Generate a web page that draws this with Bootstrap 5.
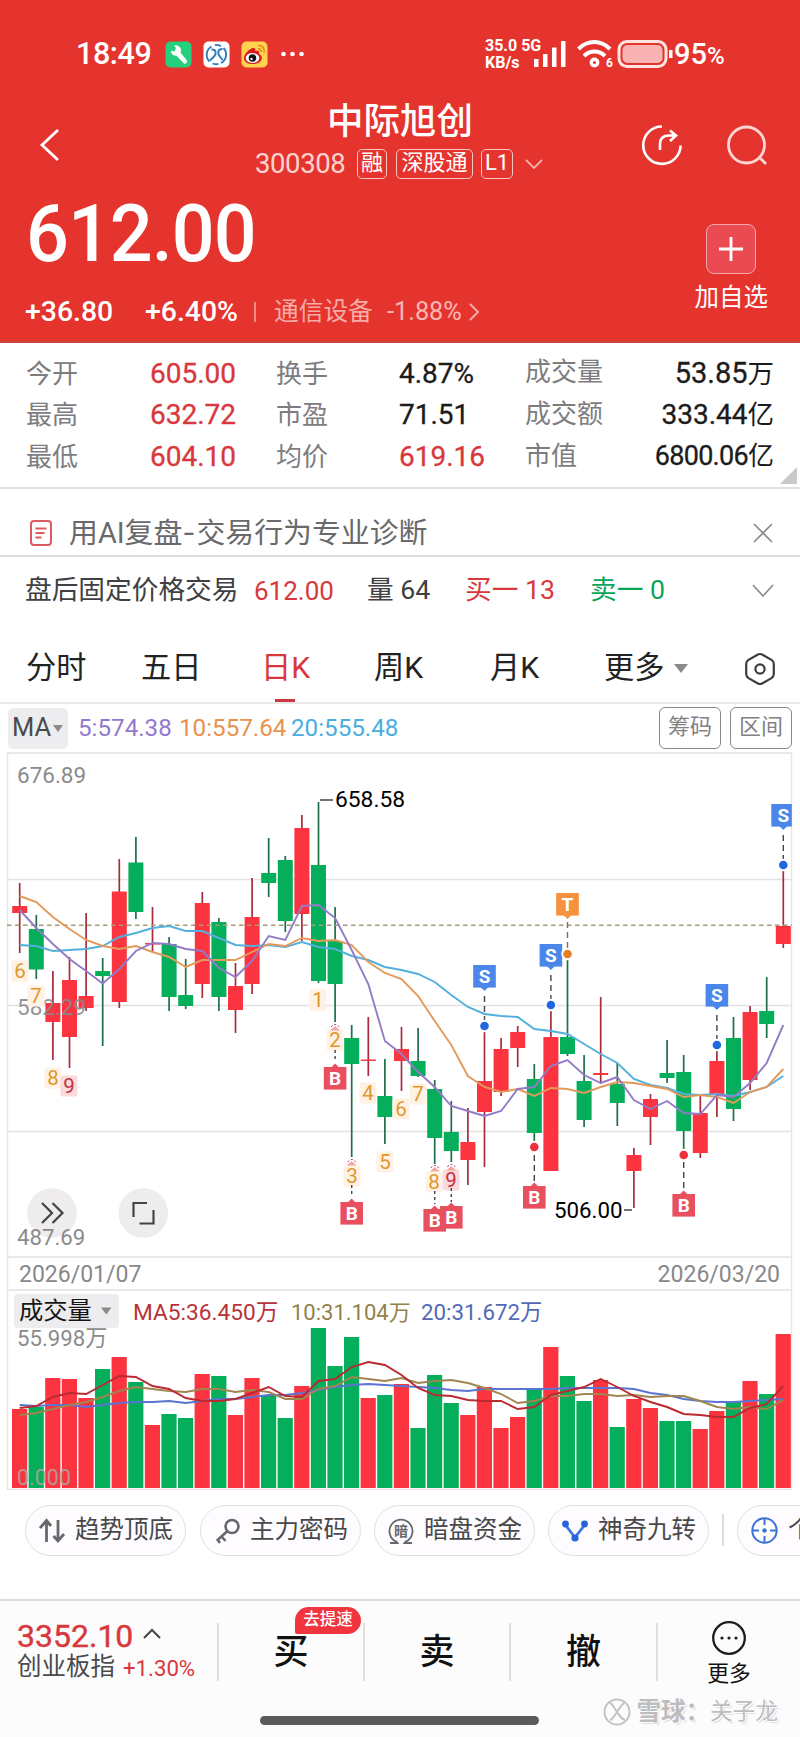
<!DOCTYPE html>
<html lang="zh-CN">
<head>
<meta charset="utf-8">
<meta name="viewport" content="width=device-width, initial-scale=1">
<title>中际旭创 300308</title>
<link href="https://cdn.jsdelivr.net/npm/bootstrap@5.3.0/dist/css/bootstrap.min.css" rel="stylesheet">
<style>
:root{--up:#d8383c;--down:#0ba55a;--ink:#222;--mute:#7d7d7f;--hair:#e2e2e4}
body{font-family:Roboto,"Noto Sans CJK SC",sans-serif;font-size:26px;line-height:1;color:var(--ink);background:#fff;width:800px;overflow-x:hidden}
svg{display:block;flex:none}
.text-up{color:var(--up)}.text-down{color:var(--down)}.text-mute{color:var(--mute)}
.tracks{display:grid;align-items:center;white-space:nowrap}
/* red header */
.quote-head{background:#e5342e;color:#fff;height:343px;border-bottom:2px solid #c9443c}
.status{height:64px;margin-top:22px;grid-template-columns:76px 89px 38px 38px 40px 204px 49px 43px 40px 57px 1fr}
.status .clock{font-size:30.5px;font-weight:500;letter-spacing:-.4px}
.status .speed{font-size:16px;font-weight:700;line-height:17px}
.status .pct{font-size:29px;font-weight:500;letter-spacing:0}
.title-bar{height:98px;margin-top:-1px;grid-template-columns:38px 217px 289px 96px 86px 1fr}
.title-bar>svg{margin-top:22px}
.stock-name{font-size:36.5px;font-weight:500;line-height:42px;margin-top:12px}
.stock-code{font-size:27.5px;letter-spacing:-.4px;color:#fbd3cf;font-weight:400;width:102px}
.tag{border:1.5px solid #f9c6c2;border-radius:5px;height:30px;font-size:22px;line-height:26px;text-align:center}
.price{font-size:80px;font-weight:500;letter-spacing:-1px;transform:scaleX(.943);transform-origin:left center}
.price-row{height:104px;margin-top:-1px;padding-left:26px;padding-right:32px}
.add-btn{width:50px;height:50px;flex:none;border:1.5px solid #f6a7a9;border-radius:8px;background:#ea4a51}
.change-row{height:38px;margin-top:7px;grid-template-columns:25px 120px 109px 20px 113px 81px 1fr;font-size:28.4px}
.change-row .chg{font-weight:500}
/* stats */
.stats{height:146px;padding-top:10px;border-bottom:2px solid var(--hair);position:relative}
.stats .tracks{height:41.5px;grid-template-columns:26px 124px 126px 123px 126px 1fr 26px}
.stats b{font-weight:400;font-size:28px;color:#1c1c1c;-webkit-text-stroke:.3px}
.stats b span{-webkit-text-stroke:0}
.stats b.text-up{color:var(--up)}
.fold{position:absolute;right:3px;bottom:3px}
.ai-row{height:68px;padding-top:22px;border-bottom:2px solid #dededf;grid-template-columns:29px 40px 1fr 47px;font-size:28.9px;color:#69696b}
.ai-row .dash{display:inline-block;transform:scaleX(1.3);margin:0 3px}
.after-row{height:69px;padding-bottom:2px;grid-template-columns:25px 229px 113px 98px 125px 162px 1fr;font-size:26.7px;color:#404043}
.after-row .n{font-size:26px}
/* tabs */
.tabs{height:78px;padding-top:9px;border-bottom:2px solid #e9e9eb;grid-template-columns:26px 115px 120px 113px 116px 114px 70px 70px 1fr;font-size:30.2px;color:#222}
.tabs .on{color:var(--up);position:relative}
.tabs .on::after{content:"";position:absolute;left:14px;bottom:-18px;width:20px;height:3px;background:#cc3b45}
.tri{width:0;height:0;border:7px solid transparent;border-top:9px solid #8b8b8b;border-bottom:0}
.ma-row{height:48px;grid-template-columns:8px 70px 101px 112px 368px 71px 62px;font-size:24.2px}
.ma-row .pick{width:60px;height:41px;background:#ededef;border-radius:5px;font-size:25.5px;color:#4a4a4d;padding-left:4px}
.ma-row .box{height:42px;border:1.6px solid #868688;border-radius:6px;font-size:22px;color:#828285;line-height:37px;text-align:center}
/* chips */
.chips{height:109px;padding:15px 0 0 25px;overflow:hidden}
.chip{height:51px;width:161px;border:1.5px solid #e0dfe2;border-radius:26px;background:#fefcfe;font-size:24.5px;color:#48484b;padding-left:12px;gap:9px;white-space:nowrap;flex:none}
/* bottom bar */
.dock{height:138px;border-top:2px solid #dcdcde;background:#fdfcfd;grid-template-columns:217px 146px 146px 147px 144px;align-items:start}
.dock .cell{height:58px;margin-top:22px;border-left:2px solid #dfdfe1;font-size:35px;font-weight:500;color:#111;position:relative}
.dock .flag{position:absolute;left:76px;top:-16px;width:66px;height:27px;border-radius:14px 14px 14px 2px;background:#f0353f;color:#fff;font-size:16.5px;line-height:25px;text-align:center}
.homebar{width:279px;height:9px;border-radius:5px;background:#5b5b5d}
.mark-by{position:absolute;right:22px;bottom:10px;height:30px;font-size:22.7px;color:#bdbdc0;text-shadow:1px 1px 0 #fff,2px 2px 1px #ddd;white-space:nowrap}
</style>
</head>
<body>
<header class="quote-head d-flex flex-column">
  <div class="status tracks">
    <span></span>
    <span class="clock">18:49</span>
    <svg width="27" height="27" viewBox="0 0 27 27"><rect x=".5" y=".5" width="26" height="26" rx="5" fill="#25d07c"/><path d="M6 9.500l3.500 1L11 7 9 4.800a5 5 0 0 1 6.500 6.700l6 7.500a2 2 0 0 1-3.200 2.800l-6.800-7A5 5 0 0 1 6 9.500z" fill="#fff"/></svg>
    <svg width="27" height="27" viewBox="0 0 27 27"><rect x=".5" y=".5" width="26" height="26" rx="5" fill="#fff"/><g fill="none" stroke="#2f7dbb" stroke-width="1.9"><path d="M6.500 20.500A9.500 9.500 0 0 1 8.500 5.500M20.500 7A9.500 9.500 0 0 1 18 22M12 4a9.500 9.500 0 0 1 6 1.200M9.500 22.500a9 9 0 0 0 6 .4"/><path d="M8.500 8.500c5-.5 5 4.500 2.500 7l-4 4M19.500 8c-5.500 0-5 5-2.500 7.500l2.500 3.500"/></g></svg>
    <svg width="27" height="27" viewBox="0 0 27 27"><rect x=".5" y=".5" width="26" height="26" rx="5" fill="#ffd34d"/><path d="M3 17c0-4 5-9 9-10 2 0 3 1 2 3 3-1 5 0 4 3 6 3 2 10-6 10-5 0-9-2-9-6z" fill="#dc1c1c"/><ellipse cx="11.500" cy="17" rx="6.800" ry="4.900" fill="#fff"/><circle cx="11.500" cy="17" r="3.800" fill="#111"/><circle cx="10.500" cy="18" r="1.200" fill="#fff"/><path d="M17 4.500c4-.5 7 2.500 6 7M17 7.800c2-.3 3.500 1 3 3.200" fill="none" stroke="#e28b1d" stroke-width="1.600"/></svg>
    <svg width="26" height="8" viewBox="0 0 26 8" fill="#fff"><circle cx="2.500" cy="4" r="2.300"/><circle cx="11.500" cy="4" r="2.300"/><circle cx="20.500" cy="4" r="2.300"/></svg>
    <span class="speed d-block">35.0 5G<br>KB/s</span>
    <svg width="34" height="28" viewBox="0 0 34 28" fill="#fff"><rect x="0" y="19" width="4.500" height="8"/><rect x="9" y="14" width="4.500" height="13"/><rect x="18" y="7.500" width="4.500" height="19.500"/><rect x="27" y="1" width="4.500" height="26"/></svg>
    <svg width="37" height="30" viewBox="0 0 37 30"><g fill="none" stroke="#fff" stroke-width="4"><path d="M1.500 10c9-9.300 22.500-9.300 31.500 0M7 17c6-6 15-6 21 0"/><circle cx="17.500" cy="23.500" r="3.200" stroke-width="3.400"/></g><text x="29" y="28" font-size="12" font-weight="700" fill="#fff">6</text></svg>
    <svg width="57" height="30" viewBox="0 0 57 30"><rect x="2" y="2.500" width="47" height="25" rx="8" fill="none" stroke="#ffe3e0" stroke-width="3"/><rect x="5.500" y="6" width="40" height="18" rx="5" fill="#f9b3b2"/><rect x="52" y="11" width="3.500" height="8" fill="#fff"/></svg>
    <span class="pct">95<small style="font-size:24px">%</small></span>
  </div>
  <div class="title-bar tracks">
    <span></span>
    <svg width="22" height="34" viewBox="0 0 22 34" fill="none" stroke="#fff" stroke-width="2.800"><path d="M20 2L4 17l16 15"/></svg>
    <div class="d-flex flex-column align-items-start">
      <div class="stock-name" style="margin-left:72px">中际旭创</div>
      <div class="d-flex align-items-center" style="margin-top:6px">
        <span class="stock-code">300308</span>
        <span class="tag" style="width:30px">融</span>
        <span class="tag" style="width:77px;margin-left:9px">深股通</span>
        <span class="tag" style="width:32px;margin-left:8px">L1</span>
        <svg class="ms-2 flex-shrink-0" style="margin-right:-20px" width="26" height="14" viewBox="0 0 26 14" fill="none" stroke="#f5b0ac" stroke-width="1.800"><path d="M5 3l8 8 8-8"/></svg>
      </div>
    </div>
    <span></span>
    <svg width="44" height="44" viewBox="0 0 44 44" fill="none" stroke="#fff" stroke-width="2.600"><path d="M22 3.500A18.700 18.700 0 1 0 40.600 22.500"/><path d="M20 27v-6c0-6 4-8.500 9-8.500h6M30 7.500l6 5-6 5.500"/></svg>
    <svg width="44" height="44" viewBox="0 0 44 44" fill="none" stroke="#fdd5d2" stroke-width="2.800"><circle cx="20.500" cy="22" r="18"/><path d="M33 34l7 7"/></svg>
  </div>
  <div class="price-row d-flex justify-content-between">
    <div class="price" style="margin-top:12px">612.00</div>
    <div class="d-flex flex-column align-items-center" style="margin-top:42px">
      <div class="add-btn d-flex align-items-center justify-content-center"><svg width="26" height="26" viewBox="0 0 26 26" stroke="#fff" stroke-width="2.800"><path d="M13 1v24M1 13h24"/></svg></div>
      <div style="font-size:24.5px;margin-top:12px;flex:none">加自选</div>
    </div>
  </div>
  <div class="change-row tracks">
    <span></span><span class="chg">+36.80</span><span class="chg">+6.40%</span>
    <span style="width:2px;height:20px;background:#f08b86"></span>
    <span style="font-size:24.700px;color:#f6aba7">通信设备</span><span style="font-size:25.300px;color:#f9b8b4">-1.88%</span>
    <svg width="12" height="18" viewBox="0 0 12 18" fill="none" stroke="#f6aba7" stroke-width="2"><path d="M2 1l8 8-8 8"/></svg>
  </div>
</header>

<section class="stats">
  <div class="tracks"><i></i><span class="text-mute">今开</span><b class="text-up">605.00</b><span class="text-mute">换手</span><b>4.87%</b><span class="d-flex justify-content-between"><span class="text-mute">成交量</span><b style="font-size:29px">53.85<span style="font-size:26.500px">万</span></b></span></div>
  <div class="tracks"><i></i><span class="text-mute">最高</span><b class="text-up">632.72</b><span class="text-mute">市盈</span><b>71.51</b><span class="d-flex justify-content-between"><span class="text-mute">成交额</span><b>333.44<span style="font-size:26.500px">亿</span></b></span></div>
  <div class="tracks"><i></i><span class="text-mute">最低</span><b class="text-up">604.10</b><span class="text-mute">均价</span><b class="text-up">619.16</b><span class="d-flex justify-content-between"><span class="text-mute">市值</span><b style="font-size:27px;letter-spacing:-.7px">6800.06<span style="font-size:26px;letter-spacing:0">亿</span></b></span></div>
  <svg class="fold" width="17" height="17"><path d="M17 0v17H0z" fill="#c9c9cb"/></svg>
</section>

<section class="ai-row tracks">
  <i></i>
  <svg width="24" height="28" viewBox="0 0 24 28" fill="none" stroke="#dc5a60" stroke-width="2"><rect x="2" y="2" width="20" height="24" rx="3"/><path d="M6.500 9.500h11M6.500 14h9M6.500 18.500h6"/></svg>
  <span>用AI复盘<span class="dash">-</span>交易行为专业诊断</span>
  <svg width="20" height="20" viewBox="0 0 20 20" stroke="#8b8b8d" stroke-width="1.700"><path d="M1 1l18 18M19 1L1 19"/></svg>
</section>
<section class="after-row tracks">
  <i></i><span>盘后固定价格交易</span><span class="n text-up">612.00</span><span>量 64</span><span class="text-up">买一 <span>13</span></span><span class="text-down">卖一 0</span>
  <svg width="22" height="14" viewBox="0 0 22 14" fill="none" stroke="#8d8d90" stroke-width="1.700"><path d="M1 1l10 11L21 1"/></svg>
</section>

<nav class="tabs tracks">
  <i></i><span>分时</span><span>五日</span><span class="on">日K</span><span>周K</span><span>月K</span><span>更多</span><i class="tri"></i>
  <svg width="32" height="34" viewBox="0 0 32 34" fill="none" stroke="#3c3c40" stroke-width="2.200"><path d="M13.500 2.700q2.500-1.400 5 0l9 5.200q2.300 1.400 2.300 4v10.200q0 2.600-2.300 4l-9 5.200q-2.500 1.400-5 0l-9-5.200q-2.300-1.400-2.300-4V11.900q0-2.600 2.300-4z"/><circle cx="16" cy="17" r="4.600"/></svg>
</nav>
<div class="ma-row tracks">
  <i></i><span class="pick d-flex align-items-center">MA<i class="tri" style="border-width:7px 5px 0;margin-left:2px"></i></span>
  <span style="color:#9478ce">5:574.38</span><span style="color:#e8924e">10:557.64</span><span style="color:#49aede">20:555.48</span>
  <span class="box" style="width:62px">筹码</span><span class="box">区间</span>
</div>

<svg id="kline" width="800" height="537" viewBox="0 752 800 537"></svg>
<svg id="volume" width="800" height="201" viewBox="0 1289 800 201"></svg>

<div class="chips d-flex align-items-start">
  <div class="chip d-flex align-items-center" style="margin-right:14px"><svg width="28" height="26" viewBox="0 0 28 26" fill="none" stroke="#68686b" stroke-width="2.800"><path d="M8.500 24V3M2 10l6.500-7.500L13 8M20 2v21M26 16l-6 7-4.500-5"/></svg><span>趋势顶底</span></div>
  <div class="chip d-flex align-items-center" style="margin-right:13px"><svg style="margin-left:2px" width="26" height="26" viewBox="0 0 26 26" fill="none" stroke="#68686b" stroke-width="2.600"><circle cx="17" cy="8.500" r="6.500"/><path d="M12.500 13L2 22.500M6.500 18.500l4 4.500M2 21l3 4"/></svg><span>主力密码</span></div>
  <div class="chip d-flex align-items-center" style="margin-right:13px"><svg width="28" height="28" viewBox="0 0 28 28"><path d="M9 24.500a11.500 11.500 0 1 1 10 0M3 26h7.500l-1.500-2M25 26h-7.500l1.500-2" fill="none" stroke="#68686b" stroke-width="1.800"/><text x="7" y="18.800" font-size="14" font-weight="700" fill="#68686b">暗</text></svg><span>暗盘资金</span></div>
  <div class="chip d-flex align-items-center"><svg width="28" height="24" viewBox="0 0 28 24"><path d="M4 5.500l10 13 10-13" fill="none" stroke="#3f76de" stroke-width="2.800"/><g fill="#2a62dc"><circle cx="4.500" cy="5" r="3.400"/><circle cx="23.500" cy="5" r="3.400"/><circle cx="14" cy="19" r="3.600"/></g></svg><span>神奇九转</span></div>
  <span style="width:2px;height:32px;background:#dededf;margin:9px 13px 0;flex:none"></span>
  <div class="chip d-flex align-items-center"><svg width="29" height="29" viewBox="0 0 29 29" fill="none" stroke="#3b74d6" stroke-width="2"><circle cx="14.500" cy="14.500" r="12.200"/><path d="M14.500 2v7M14.500 20v7M2 14.500h7M20 14.500h7"/><circle cx="14.500" cy="14.500" r="2.200" fill="#3b74d6" stroke="none"/></svg><span>个</span></div>
</div>

<footer class="dock tracks position-relative">
  <div style="padding:18px 0 0 17px">
    <div class="text-up d-flex align-items-center" style="font-size:32px;height:33px;-webkit-text-stroke:.4px">3352.10<svg style="margin:-4px 0 0 9px" width="20" height="11" viewBox="0 0 20 11" fill="none" stroke="#444" stroke-width="2"><path d="M2 10l8-8 8 8"/></svg></div>
    <div class="d-flex align-items-center" style="font-size:24.500px;height:26px;color:#4a4a4d;margin-top:2px">创业板指<span class="text-up" style="font-size:22.200px;margin:2px 0 0 8px">+1.30%</span></div>
  </div>
  <div class="cell d-flex align-items-center justify-content-center">买<span class="flag">去提速</span></div>
  <div class="cell d-flex align-items-center justify-content-center">卖</div>
  <div class="cell d-flex align-items-center justify-content-center">撤</div>
  <div class="cell d-flex flex-column align-items-center" style="font-size:21.800px;font-weight:400"><svg style="margin:-3px 0 7px;flex:none" width="36" height="36" viewBox="0 0 36 36"><circle cx="18" cy="18" r="15.800" fill="none" stroke="#1d1d1d" stroke-width="2.300"/><g fill="#1d1d1d"><circle cx="11" cy="18" r="1.600"/><circle cx="18" cy="18" r="1.600"/><circle cx="25" cy="18" r="1.600"/></g></svg>更多</div>
  <div class="position-absolute bottom-0 start-0 w-100 d-flex justify-content-center" style="padding-bottom:12px"><div class="homebar" style="margin-left:-1px"></div></div>
  <div class="mark-by d-flex align-items-center"><svg width="30" height="30" viewBox="0 0 30 30" fill="none" stroke="#c3c3c6" stroke-width="2"><circle cx="15" cy="15" r="12.500"/><path d="M8 6c4 2 4 5 7 9s4 7 8 8M22 6c-4 3-5 6-7 9s-4 7-7 8"/></svg><span style="margin-left:4px;font-weight:700;font-size:24.500px">雪球：</span><span>关子龙</span></div>
</footer>

<script>
// Daily sessions: direction, high, body top, body bottom, low, volume bar top
const days = `R 883 906 913 953 1409|G 915 929 969.500 979 1407|R 971 1003 1022 1060 1378|R 957 980 1037 1068 1379|R 913 996 1008 1011 1398|G 958 971 976 1046 1369|R 859 891.500 1002 1008 1357|G 837 862.500 912 919 1382|R 907 943 944.500 952 1425|G 937 944 997 1011 1414|G 959 995 1006 1009 1418|R 892 903 984 998 1374|G 918 922 997 1011 1376|R 963 986 1010 1033 1415|R 878 917 984 994 1378|G 838 873 883 897 1395|G 856 860 921 932 1418|R 815 828 914 941 1386|G 802 865 981 983 1328|G 907 941 984 1022 1366|G 1025 1038 1064 1157 1337|R 1017 1059.500 1061 1076 1398|G 1059 1096 1117 1144 1395|R 1027 1049 1061 1091 1384|G 1028 1061 1076 1077 1428|G 1080 1089 1138 1164 1375|G 1101 1132 1151 1162 1403|R 1108 1142 1160 1185 1415|R 1032 1081 1112 1167 1387|R 1038 1049 1092 1096 1428|R 1026 1032 1048 1067 1417|G 1064 1079 1133 1141 1390|R 1011 1037 1171 1171 1347|G 960 1037 1054 1056 1376|G 1055 1081 1120 1127 1401|R 997 1073 1075 1084 1380|G 1063 1084 1103 1126 1427|R 1148 1155 1171 1208 1399|R 1094 1099 1117 1145 1408|G 1040 1073 1078 1083 1421|G 1055 1072 1131 1149 1421|R 1094 1113 1153 1158 1429|R 1051 1061 1094 1117 1411|G 1017 1038 1109 1121 1402|R 1006 1012 1080 1090 1381|G 977 1011 1024 1038 1394|R 871 926 944 948 1334`
  .split('|').map(s => { const p = s.split(' '); return [p[0], ...p.slice(1).map(Number)]; });
const price = [
 ['#53b0dc','945 946 951 950 949 946 937 933 928 926 931 931 938 945 946 945 947 942 947 949 956 960 967 970 974 982 995 1007 1014 1016 1017 1029 1031 1034 1044 1054 1063 1079 1085 1088 1094 1095 1094 1096 1092 1087 1076'],
 ['#e39a5a','896 902 917 929 940 946 949 946 952 957 967 960 960 960 952 944 946 938 941 940 945 962 973 979 996 1021 1045 1076 1087 1092 1089 1096 1088 1089 1093 1087 1082 1083 1086 1089 1097 1095 1097 1103 1092 1087 1069'],
 ['#947bc8','910 928 944 959 971 983.5 969 951 943 944 949 951 968 977 961 936 940 906 905 918 950 984 1041 1054 1072 1087 1106 1111 1116 1111 1089 1087 1066 1060 1075 1083 1077 1100 1109 1101 1113 1114 1095 1097 1083 1063 1025']];
const volMa = [
 ['#5b74d0','1405 1406 1405 1405 1407 1405 1403 1402 1402 1401 1403 1401 1399 1399 1397 1395 1395 1393 1390 1387 1385 1384 1385 1386 1387 1388 1390 1391 1389 1389 1389 1389 1389 1388 1388 1388 1388 1389 1393 1395 1399 1401 1402 1402 1401 1400 1399'],
 ['#a1854f','1415 1413 1409 1405 1402 1397 1391 1387 1389 1391 1392 1389 1389 1392 1390 1392 1399 1399 1389 1386 1377 1379 1381 1378 1383 1381 1380 1383 1388 1394 1403 1401 1396 1396 1394 1394 1396 1395 1397 1396 1396 1401 1407 1409 1407 1409 1400'],
 ['#b92a31','1408 1406 1397 1393 1394 1385 1376 1377 1386 1389 1398 1401 1401 1399 1393 1387 1396 1397 1381 1379 1367 1362 1365 1375 1388 1395 1396 1400 1401 1401 1409 1407 1395 1391 1387 1379 1387 1396 1402 1407 1414 1415 1417 1417 1408 1404 1386']];
const X = i => 19.7 + i * 16.6;
const RED = '#fb3440', GREEN = '#04ae5a';
const rect = (x, y, w, h, f, r = 0) => `<rect x="${x}" y="${y}" width="${w}" height="${h}" fill="${f}" rx="${r}"/>`;
const line = (a, b, c, d, s, w = 1.5, dash = '') => `<line x1="${a}" y1="${b}" x2="${c}" y2="${d}" stroke="${s}" stroke-width="${w}" stroke-dasharray="${dash}"/>`;
const text = (x, y, t, s, f, extra = '') => `<text x="${x}" y="${y}" font-size="${s}" fill="${f}" ${extra}>${t}</text>`;
const poly = ([c, ys]) => `<polyline fill="none" stroke="${c}" stroke-width="1.9" points="${ys.split(' ').map((y, i) => X(i) + ',' + y).join(' ')}"/>`;

let k = line(7.5, 753, 7.5, 1289, '#e6e6e8') + line(791.5, 753, 791.5, 1289, '#e6e6e8');
[753, 879.5, 1005.5, 1131.5, 1257].forEach(y => k += line(7, y, 792, y, '#e2e2e4'));
days.forEach(([d, hi, t, b, lo], i) => {
  k += line(X(i), hi, X(i), lo, d === 'R' ? '#a52c3c' : '#1d7045', 1.7);
  k += rect(X(i) - 7.5, t, 15, b - t, d === 'R' ? RED : GREEN);
});
k += line(7, 925.3, 792, 925.3, '#a39a72', 1.5, '4.500 3.500');
k += price.map(poly).join('');
k += text(17, 783, '676.89', 22.5, '#8b8b8d') + text(17, 1015, '582.29', 22.5, '#8b8b8d', 'opacity=".9"');
k += line(320, 800, 333, 800, '#444', 1.5) + text(335, 807, '658.58', 22.8, '#000');
k += line(624, 1210, 632, 1210, '#444', 1.5) + text(554, 1218, '506.00', 22.3, '#000');
[[20,971,6],[36,996,7],[53,1078,8],[69,1086,9],[318,1000,1],[335,1040,2],[352,1176,3],[368,1093,4],[385,1162,5],[401,1109,6],[418,1094,7],[434,1182,8],[451,1180,9]]
 .forEach(([x, y, n]) => k += rect(x - 8.5, y - 10.5, 17, 21, n === 9 ? '#fadadd' : '#fff1e4', 2) + text(x, y + 7, n, 20.5, n === 9 ? '#c4303c' : '#e0982c', 'text-anchor="middle"'));
[[19,1025],[20,1160],[25,1166],[26,1165]].forEach(([i, y]) => k += `<path d="M${X(i)} ${y + 1}l5 4.500h-10z" fill="#f5a6a0"/><path d="M${X(i) - 4} ${y + 2}q4-5 8 0" fill="none" stroke="#99344a" stroke-dasharray="2 2"/>`);
// Trade markers: letter, session index, badge top, dash from, dash to, dot y
[['S',28,965,996,1020,1026],['S',32,944,975,1000,1005],['S',42,984,1015,1040,1045],['S',46,804,835,861,865],['T',33,893,922,948,954],
 ['B',19,1067,1050,1062],['B',20,1202,1185,1197],['B',25,1209,1191,1204],['B',26,1206,1188,1202],['B',31,1186,1155,1181,1147],['B',40,1194,1162,1188,1155]]
 .forEach(([l, i, y, a, b, dot]) => {
  const x = X(i), c = { S: '#4b86ea', T: '#f6913f', B: '#e9505f' }[l], dc = { S: '#1f69e0', T: '#e67e25', B: '#ee303c' }[l];
  const bx = i === 46 ? x - 12 : x - 11.3;
  k += line(x, a, x, b, l === 'T' ? '#7e7040' : '#43434d', 1.4, dot ? '6 4' : '3 3');
  if (dot) k += `<circle cx="${x}" cy="${dot}" r="6.200" fill="#fff"/><circle cx="${x}" cy="${dot}" r="4.300" fill="${dc}"/>`;
  k += rect(bx, y, i === 46 ? 20.5 : 22.6, 22.6, c);
  k += l === 'B' ? `<path d="M${x} ${y - 3.5}l4 4h-8z" fill="${c}"/>` : `<path d="M${x} ${y + 26}l4-4h-8z" fill="${c}"/>`;
  k += text(x, y + 18, l, 19, '#fff', 'font-weight="700" text-anchor="middle"');
 });
k += '<circle cx="52" cy="1213" r="24.800" fill="#efecee"/><circle cx="143.300" cy="1213" r="24.800" fill="#efecee"/>';
k += '<g fill="none" stroke="#444448" stroke-width="2.200"><path d="M42 1203l10 10-10 10M52.500 1203l10 10-10 10M133.500 1217v-14h13.500M153.500 1210v13.500h-14"/></g>';
k += text(17, 1244.5, '487.69', 22.2, '#8b8b8d') + text(19, 1282, '2026/01/07', 23, '#88888a') + text(780, 1282, '2026/03/20', 23, '#88888a', 'text-anchor="end"');
document.getElementById('kline').innerHTML = k;

let v = line(7.5, 1289, 7.5, 1490, '#e6e6e8') + line(791.5, 1289, 791.5, 1490, '#e6e6e8') + line(7, 1489.5, 792, 1489.5, '#f3dfe0', 1.5);
v += line(7, 1290, 792, 1290, '#e2e2e4', 1.5);
days.forEach((d, i) => v += rect(X(i) - 7.7, d[5], 15.2, 1488 - d[5], d[0] === 'R' ? RED : GREEN));
v += volMa.map(poly).join('');
v += rect(14, 1294, 105, 34, '#ededef', 4) + text(19, 1319, '成交量', 24.3, '#161616') + '<path d="M101 1307.500h10.500l-5.200 7z" fill="#8b8b8b"/>';
v += text(133, 1320, 'MA5:36.450万', 22.7, '#b83339') + text(291, 1320, '10:31.104万', 22, '#94804b') + text(421, 1320, '20:31.672万', 22.3, '#5269b4');
v += text(17, 1346, '55.998万', 22.2, '#8b8b8d') + text(17, 1484.5, '0.000', 21.5, '#b0a09a', 'opacity=".9"');
document.getElementById('volume').innerHTML = v;
</script>
<script src="https://cdn.jsdelivr.net/npm/bootstrap@5.3.0/dist/js/bootstrap.bundle.min.js"></script>
</body>
</html>
